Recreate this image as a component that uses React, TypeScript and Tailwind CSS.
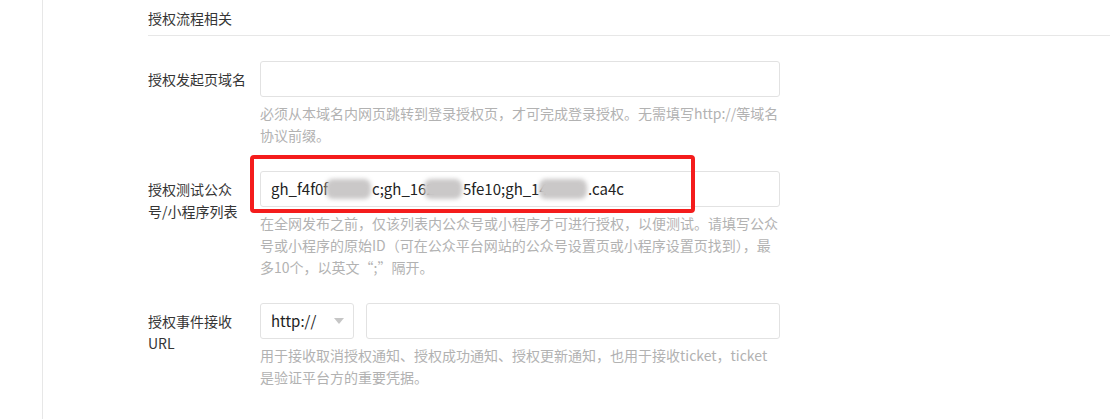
import React from 'react'

const FONT = { fontFamily: '"Noto Sans CJK SC", "Microsoft YaHei", sans-serif' }

// visible pieces of the redacted id list, with their widths in the screenshot
const ID_PARTS: { text?: string; blob?: boolean; w: number }[] = [
  { text: 'gh_f4f0f', w: 54 },
  { blob: true, w: 47 },
  { text: 'c;gh_162', w: 51 },
  { blob: true, w: 40 },
  { text: '5fe10;gh_14', w: 75 },
  { blob: true, w: 50 },
  { text: '.ca4c', w: 30 },
]

function Help({ lines }: { lines: string[] }) {
  return (
    <div className="mt-[5px] text-[14px] leading-[22px] text-[#b2b2b2]">
      {lines.map((l, i) => (
        <div key={i} className="whitespace-nowrap">{l}</div>
      ))}
    </div>
  )
}

function Row({ label, children, help }: { label: string[]; children: React.ReactNode; help: string[] }) {
  return (
    <div className="flex">
      <div className="w-[112px] shrink-0 pt-[7px] text-[14px] leading-[22px] text-[#353535]">
        {label.map((l, i) => (
          <div key={i} className="whitespace-nowrap">{l}</div>
        ))}
      </div>
      <div className="w-[520px]">
        {children}
        <Help lines={help} />
      </div>
    </div>
  )
}

export default function App() {
  return (
    <div className="flex min-h-[419px] w-[1110px] bg-white" style={FONT}>
      <div className="w-[43px] shrink-0 border-r border-[#e7e7e7]" />
      <div className="flex-1 pl-[105px]">
        <div className="border-b border-[#e7e7e7] pt-[7px] pb-[6px] text-[14px] leading-[22px] text-[#353535]">
          授权流程相关
        </div>

        <div className="mt-[25px] flex flex-col gap-[25px]">
          <Row
            label={['授权发起页域名']}
            help={['必须从本域名内网页跳转到登录授权页，才可完成登录授权。无需填写http://等域名', '协议前缀。']}
          >
            <div className="h-[36px] rounded-[3px] border border-[#e2e2e2]" />
          </Row>

          <Row
            label={['授权测试公众', '号/小程序列表']}
            help={[
              '在全网发布之前，仅该列表内公众号或小程序才可进行授权，以便测试。请填写公众',
              '号或小程序的原始ID（可在公众平台网站的公众号设置页或小程序设置页找到），最',
              '多10个，以英文“;”隔开。',
            ]}
          >
            <div className="relative">
              <div className="flex h-[36px] items-center rounded-[3px] border border-[#e2e2e2] pl-[10px] text-[15px] text-[#222222]">
                {ID_PARTS.map((p, i) =>
                  p.blob ? (
                    <span key={i} className="relative h-[22px] shrink-0" style={{ width: p.w }}>
                      <span className="absolute inset-x-[1px] top-[1px] bottom-[1px] rounded-[7px] bg-[#cac8c8] blur-[2px]" />
                    </span>
                  ) : (
                    <span key={i} className="shrink-0 whitespace-nowrap" style={{ width: p.w }}>
                      {p.text}
                    </span>
                  ),
                )}
              </div>
              <div className="pointer-events-none absolute -left-[10px] -top-[16px] h-[58px] w-[445px] rounded-[4px] border-[4px] border-[#f41c1c]" />
            </div>
          </Row>

          <Row
            label={['授权事件接收', 'URL']}
            help={['用于接收取消授权通知、授权成功通知、授权更新通知，也用于接收ticket，ticket', '是验证平台方的重要凭据。']}
          >
            <div className="flex gap-[12px]">
              <div className="flex h-[36px] w-[94px] items-center justify-between rounded-[3px] border border-[#e2e2e2] pl-[10px] pr-[9px] text-[15px] text-[#222222]">
                <span>http://</span>
                <svg width="10" height="6" viewBox="0 0 10 6">
                  <path d="M0 0h10L5 6z" fill="#c6c6c6" />
                </svg>
              </div>
              <div className="h-[36px] flex-1 rounded-[3px] border border-[#e2e2e2]" />
            </div>
          </Row>
        </div>
      </div>
    </div>
  )
}
